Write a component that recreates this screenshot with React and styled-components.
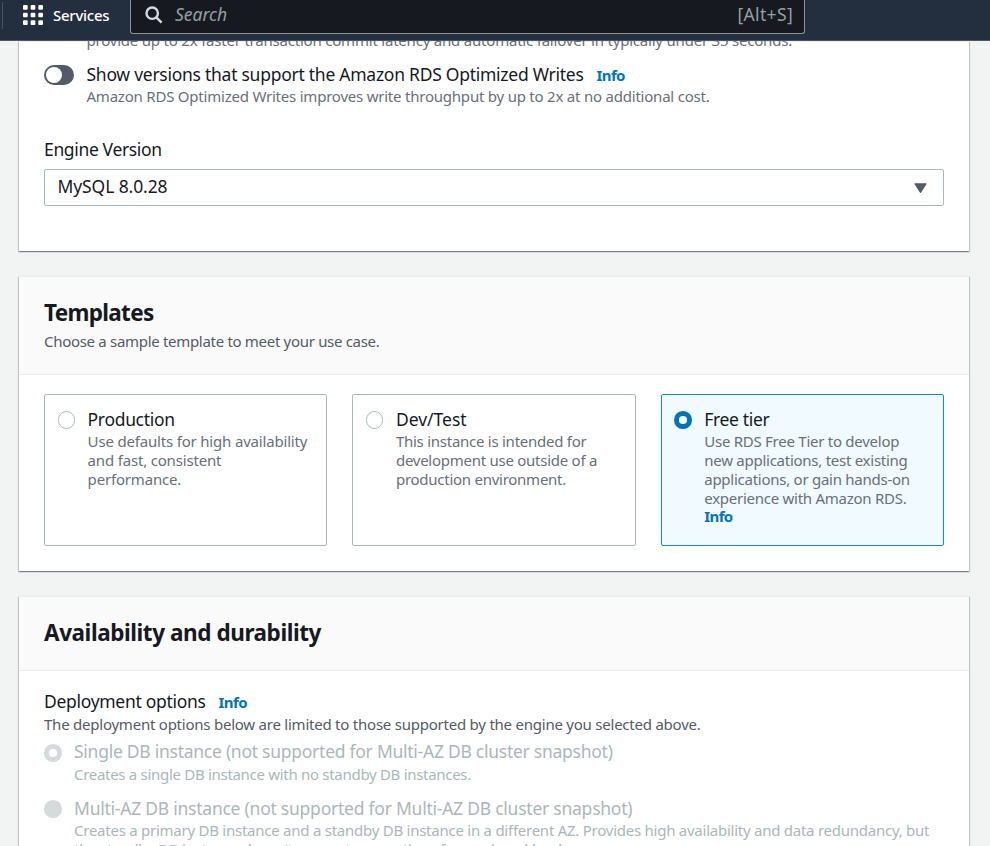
import React from "react";
import styled, { createGlobalStyle, css } from "styled-components";

const GlobalStyle = createGlobalStyle`
  *, *::before, *::after { box-sizing: border-box; }
  body {
    margin: 0;
    background: #f2f3f3;
    color: #16191f;
    font-family: "Noto Sans", "Open Sans", sans-serif;
  }
`;

const tracking = css`
  letter-spacing: ${(p) => p.$track ?? -0.24}px;
`;

const Page = styled.div`
  display: flex;
  flex-direction: column;
  width: 990px;
  height: 846px;
  overflow: hidden;
`;

const TopBar = styled.header`
  display: flex;
  flex: none;
  align-items: flex-start;
  height: 41px;
  background: #232f3e;
  border-bottom: 1px solid #4d5763;
`;

const Divider = styled.span`
  width: 1px;
  height: 27px;
  margin: 2px 20px 0 2px;
  background: #49535f;
`;

const ServicesButton = styled.button`
  display: flex;
  align-items: flex-start;
  gap: 10px;
  width: 107px;
  height: 31px;
  padding: 5px 0 0;
  border: 0;
  background: none;
  color: #fff;
  font: 500 15px/20px "Noto Sans", sans-serif;
  letter-spacing: -0.26px;
`;

const SearchBox = styled.div`
  display: flex;
  align-items: center;
  width: 675px;
  height: 34px;
  padding: 0 11px 5px 14px;
  border: 1px solid #8b9697;
  border-top: 0;
  border-radius: 0 0 3px 3px;
  background: #16191f;
  color: #95a0a3;
  font-size: 17.5px;
  line-height: 22px;

  svg {
    margin-top: 2px;
  }
`;

const Placeholder = styled.span`
  flex: 1;
  margin-left: 12px;
  font-style: italic;
`;

const Shortcut = styled.span`
  ${tracking}
`;

const Content = styled.main`
  display: flex;
  flex: 1;
  flex-direction: column;
  gap: 25px;
  min-height: 0;
  padding: 0 21px 0 19px;
  overflow: hidden;
`;

const Panel = styled.section`
  flex: none;
  height: ${(p) => p.$height}px;
  border-top: 1px solid #eaeded;
  background: #fff;
  box-shadow:
    0 1px 1px 0 rgba(0, 28, 36, 0.3),
    1px 1px 1px 0 rgba(0, 28, 36, 0.15),
    -1px 1px 1px 0 rgba(0, 28, 36, 0.15),
    0 0 1px 0 rgba(0, 28, 36, 0.1);
`;

const PanelHeader = styled.div`
  height: ${(p) => p.$height}px;
  padding: 22px 25px 0;
  border-bottom: 1px solid #eaeded;
  background: #fafafa;
`;

const PanelBody = styled.div`
  padding: ${(p) => p.$top}px 25px 0;
`;

const Heading = styled.h2`
  margin: 0;
  font-size: 22.5px;
  font-weight: 700;
  line-height: 28px;
  white-space: nowrap;
  ${tracking}
`;

const Label = styled.div`
  font-size: 17.5px;
  line-height: 22px;
  white-space: nowrap;
  color: ${(p) => (p.$disabled ? "#aab7b8" : "#16191f")};
  ${tracking}
`;

const Description = styled.p`
  margin: ${(p) => p.$gap ?? 2}px 0 0;
  font-size: 15px;
  line-height: ${(p) => (p.$multi ? "18.85px" : "19px")};
  white-space: ${(p) => (p.$multi ? "pre" : "nowrap")};
  color: ${(p) => (p.$disabled ? "#aab7b8" : p.$light ? "#687078" : "#545b64")};
  ${tracking}
`;

const ScrolledLine = styled(Description)`
  margin: -11px 0 0;
  padding-left: 42.5px;
`;

const InfoLink = styled.a`
  margin-left: ${(p) => p.$space ?? 13}px;
  color: #0073bb;
  font-size: 15px;
  font-weight: 700;
  line-height: 18px;
  letter-spacing: -0.6px;
`;

const ToggleRow = styled.div`
  display: grid;
  grid-template-columns: 30px 1fr;
  column-gap: 12.5px;
  margin-top: 13px;
`;

const Toggle = styled.span`
  display: flex;
  align-items: center;
  width: 30px;
  height: 20px;
  margin-top: 2px;
  padding-left: 2px;
  border-radius: 10px;
  background: #545b64;
`;

const Knob = styled.span`
  width: 16px;
  height: 16px;
  border-radius: 50%;
  background: #fff;
`;

const Field = styled.div`
  margin-top: 32px;
`;

const SelectBox = styled.div`
  display: flex;
  align-items: flex-start;
  justify-content: space-between;
  height: 37px;
  margin-top: 9px;
  padding: 5px 16px 0 12.5px;
  border: 1px solid #aab7b8;
  border-radius: 2px;

  svg {
    margin-top: 8px;
  }
`;

const Cards = styled.div`
  display: grid;
  grid-template-columns: repeat(3, 1fr);
  gap: 25px;
`;

const Card = styled.label`
  display: grid;
  grid-template-columns: 17.5px 1fr;
  column-gap: 12.6px;
  align-content: start;
  height: 152px;
  padding: 13px 12.5px;
  border: 1px solid ${(p) => (p.$selected ? "#0f93ac" : "#aab7b8")};
  border-radius: 2px;
  background: ${(p) => (p.$selected ? "#f1faff" : "#fff")};
`;

const Option = styled.label`
  display: grid;
  grid-template-columns: 17.5px 1fr;
  column-gap: 12.5px;
  margin-top: ${(p) => p.$top}px;
`;

const RADIO = {
  off: css`border: 1.5px solid #aab7b8; background: #fff;`,
  on: css`border: 5.5px solid #0073bb; background: #fff;`,
  disabledOn: css`border: 5.5px solid #d5dbdb; background: #fff;`,
  disabledOff: css`border: 0; background: #d5dbdb;`,
};

const Radio = styled.span`
  width: 17.5px;
  height: 17.5px;
  margin-top: ${(p) => p.$top ?? 3}px;
  border-radius: 50%;
  ${(p) => RADIO[p.$state]}
`;

const AppsIcon = () => (
  <svg width="20" height="20" viewBox="0 0 20 20" fill="#fff">
    {[0, 7.65, 15.3].map((y) =>
      [0, 7.65, 15.3].map((x) => (
        <rect key={`${x}-${y}`} x={x} y={y} width="4.7" height="4.7" rx="1" />
      ))
    )}
  </svg>
);

const SearchIcon = () => (
  <svg width="18" height="18" viewBox="0 0 18 18" fill="none" stroke="#d5dbdb" strokeWidth="2.4">
    <circle cx="7.2" cy="7.2" r="5.7" />
    <path d="M11.3 11.3 L16.6 16.6" />
  </svg>
);

const Caret = () => (
  <svg width="13" height="11" viewBox="0 0 13 11" fill="#545b64" stroke="#545b64" strokeLinejoin="round">
    <path d="M0.8 0.8 H12.2 L6.5 9.8 Z" />
  </svg>
);

const templates = [
  {
    name: "Production",
    track: -0.32,
    textTrack: -0.18,
    text: "Use defaults for high availability\nand fast, consistent\nperformance.",
  },
  {
    name: "Dev/Test",
    track: 0,
    textTrack: -0.26,
    text: "This instance is intended for\ndevelopment use outside of a\nproduction environment.",
  },
  {
    name: "Free tier",
    track: -0.34,
    textTrack: -0.26,
    selected: true,
    text: "Use RDS Free Tier to develop\nnew applications, test existing\napplications, or gain hands-on\nexperience with Amazon RDS.\n",
  },
];

export default function App() {
  return (
    <>
      <GlobalStyle />
      <Page>
        <TopBar>
          <Divider />
          <ServicesButton>
            <AppsIcon />
            Services
          </ServicesButton>
          <SearchBox>
            <SearchIcon />
            <Placeholder>Search</Placeholder>
            <Shortcut $track={0.34}>[Alt+S]</Shortcut>
          </SearchBox>
        </TopBar>
        <Content>
          <Panel $height={210}>
            <PanelBody $top={0}>
              <ScrolledLine $light $track={-0.208}>
                provide up to 2x faster transaction commit latency and automatic failover in
                typically under 35 seconds.
              </ScrolledLine>
              <ToggleRow>
                <Toggle>
                  <Knob />
                </Toggle>
                <div>
                  <Label $track={-0.263}>
                    Show versions that support the Amazon RDS Optimized Writes
                    <InfoLink>Info</InfoLink>
                  </Label>
                  <Description $light $track={-0.219}>
                    Amazon RDS Optimized Writes improves write throughput by up to 2x at no
                    additional cost.
                  </Description>
                </div>
              </ToggleRow>
              <Field>
                <Label $track={-0.35}>Engine Version</Label>
                <SelectBox>
                  <Label $track={-0.1}>MySQL 8.0.28</Label>
                  <Caret />
                </SelectBox>
              </Field>
            </PanelBody>
          </Panel>

          <Panel $height={295}>
            <PanelHeader $height={98}>
              <Heading $track={-0.68}>Templates</Heading>
              <Description $gap={5} $track={-0.306}>
                Choose a sample template to meet your use case.
              </Description>
            </PanelHeader>
            <PanelBody $top={19}>
              <Cards>
                {templates.map((t) => (
                  <Card key={t.name} $selected={t.selected}>
                    <Radio $state={t.selected ? "on" : "off"} />
                    <div>
                      <Label $track={t.track}>{t.name}</Label>
                      <Description $multi $light $gap={2} $track={t.textTrack}>
                        {t.text}
                        {t.selected && <InfoLink $space={0}>Info</InfoLink>}
                      </Description>
                    </div>
                  </Card>
                ))}
              </Cards>
            </PanelBody>
          </Panel>

          <Panel $height={420}>
            <PanelHeader $height={74}>
              <Heading $track={-0.435}>Availability and durability</Heading>
            </PanelHeader>
            <PanelBody $top={19}>
              <Label $track={-0.3}>
                Deployment options
                <InfoLink>Info</InfoLink>
              </Label>
              <Description $gap={3} $track={-0.231}>
                The deployment options below are limited to those supported by the engine you
                selected above.
              </Description>
              <Option $top={6}>
                <Radio $state="disabledOn" $top={4} />
                <div>
                  <Label $disabled $track={-0.26}>
                    Single DB instance (not supported for Multi-AZ DB cluster snapshot)
                  </Label>
                  <Description $disabled $gap={3} $track={-0.298}>
                    Creates a single DB instance with no standby DB instances.
                  </Description>
                </div>
              </Option>
              <Option $top={13}>
                <Radio $state="disabledOff" $top={3} />
                <div>
                  <Label $disabled $track={-0.24}>
                    Multi-AZ DB instance (not supported for Multi-AZ DB cluster snapshot)
                  </Label>
                  <Description $disabled $multi $gap={2} $track={-0.25}>
                    {"Creates a primary DB instance and a standby DB instance in a different AZ. Provides high availability and data redundancy, but\nthe standby DB instance doesn't support connections for read workloads."}
                  </Description>
                </div>
              </Option>
            </PanelBody>
          </Panel>
        </Content>
      </Page>
    </>
  );
}
